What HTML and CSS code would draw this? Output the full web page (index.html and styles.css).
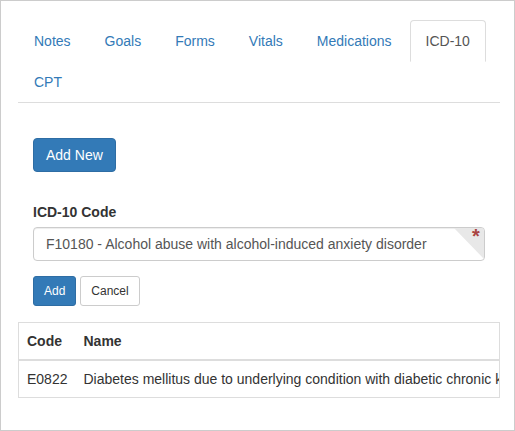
FILE: index.html
```html
<!DOCTYPE html>
<html>
<head>
<meta charset="utf-8">
<link rel="stylesheet" href="styles.css">
</head>
<body>
<div class="frame">
  <ul class="tabs">
    <li><a>Notes</a></li>
    <li><a>Goals</a></li>
    <li><a>Forms</a></li>
    <li><a>Vitals</a></li>
    <li><a>Medications</a></li>
    <li class="active"><a>ICD-10</a></li>
    <li><a>CPT</a></li>
  </ul>
  <div class="pane">
    <button class="btn btn-primary">Add New</button>
    <div class="form-group">
      <label class="label">ICD-10 Code</label>
      <div class="field">
        <input class="input" type="text" value="F10180 - Alcohol abuse with alcohol-induced anxiety disorder">
        <span class="req"><span class="star">*</span></span>
      </div>
    </div>
    <div class="actions">
      <button class="btn btn-sm btn-primary">Add</button>
      <button class="btn btn-sm btn-default">Cancel</button>
    </div>
  </div>
  <div class="table-wrap">
    <table class="table">
      <thead>
        <tr><th>Code</th><th>Name</th></tr>
      </thead>
      <tbody>
        <tr><td>E0822</td><td>Diabetes mellitus due to underlying condition with diabetic chronic kidney disease</td></tr>
      </tbody>
    </table>
  </div>
</div>
</body>
</html>
```

FILE: styles.css
```css
* { box-sizing: border-box; }
html, body { margin: 0; padding: 0; }
body {
  font-family: "Liberation Sans", Arial, sans-serif;
  font-size: 14px;
  line-height: 20px;
  color: #333;
  background: #fff;
}
.frame {
  width: 515px;
  height: 431px;
  border: 1px solid #ccc;
  padding: 19px 14px 0 17px;
  overflow: hidden;
}
.tabs {
  list-style: none;
  margin: 0;
  padding: 0;
  display: flex;
  flex-wrap: wrap;
  border-bottom: 1px solid #ddd;
}
.tabs li {
  margin-right: 2px;
  margin-bottom: -1px;
}
.tabs a {
  display: block;
  padding: 10px 15px;
  border: 1px solid transparent;
  border-radius: 4px 4px 0 0;
  color: #337ab7;
  line-height: 20px;
  cursor: pointer;
}
.tabs li.active a {
  color: #555;
  background: #fff;
  border-color: #ddd #ddd transparent;
}
.pane {
  padding: 35px 15px 16px 15px;
}
.btn {
  display: inline-block;
  font-family: inherit;
  font-size: 14px;
  line-height: 20px;
  padding: 6px 12px;
  border: 1px solid transparent;
  border-radius: 4px;
  margin: 0;
  cursor: pointer;
}
.btn-primary {
  color: #fff;
  background: #337ab7;
  border-color: #2e6da4;
}
.btn-default {
  color: #333;
  background: #fff;
  border-color: #ccc;
}
.btn-sm {
  font-size: 12px;
  line-height: 18px;
  padding: 5px 10px;
  border-radius: 3px;
}
.form-group {
  margin-top: 30px;
}
.label {
  display: block;
  font-weight: bold;
  margin-bottom: 5px;
}
.field {
  position: relative;
}
.input {
  display: block;
  width: 100%;
  height: 34px;
  padding: 6px 12px;
  font-family: inherit;
  font-size: 14px;
  line-height: 20px;
  color: #555;
  border: 1px solid #ccc;
  border-radius: 4px;
  box-shadow: inset 0 1px 1px rgba(0,0,0,.075);
  background: #fff;
}
.req {
  position: absolute;
  top: 1px;
  right: 1px;
  width: 0;
  height: 0;
  border-style: solid;
  border-width: 0 30px 31px 0;
  border-color: transparent #e8e8e8 transparent transparent;
  border-top-right-radius: 3px;
}
.star {
  position: absolute;
  left: 18px;
  top: -2px;
  color: #a94442;
  font-size: 20px;
  font-weight: bold;
  line-height: 20px;
}
.actions {
  margin-top: 15px;
  display: flex;
  gap: 4px;
}
.table-wrap {
  border: 1px solid #ddd;
  overflow: hidden;
  margin-bottom: 20px;
}
.table {
  border-collapse: collapse;
  white-space: nowrap;
}
.table th, .table td {
  padding: 8px;
  line-height: 20px;
  text-align: left;
  vertical-align: top;
}
.table th {
  font-weight: bold;
  border-bottom: 2px solid #ddd;
}
```
